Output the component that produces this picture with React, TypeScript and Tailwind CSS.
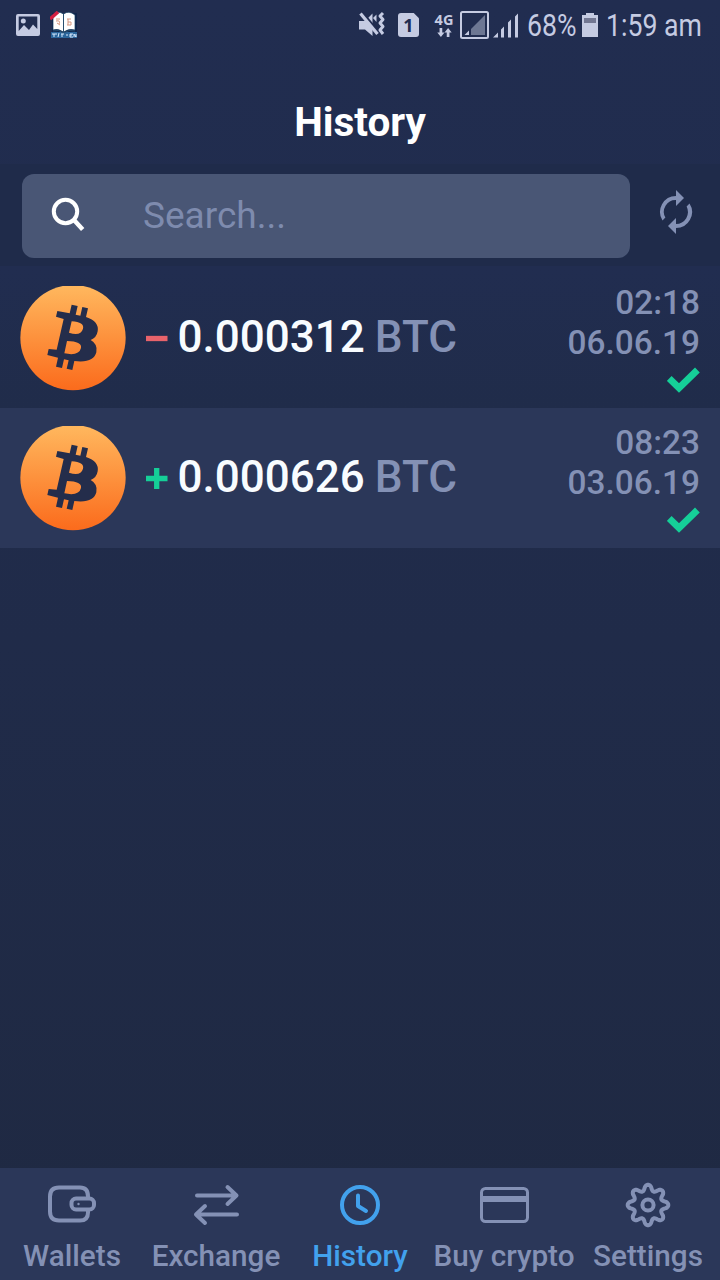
import React from "react";

function gearPath() {
  let d = "";
  for (let i = 0; i <= 192; i++) {
    const a = (i / 192) * Math.PI * 2;
    const c = Math.cos(8 * a);
    const r = 17.4 + 2.9 * Math.sign(c) * Math.pow(Math.abs(c), 0.75);
    d += `${i ? "L" : "M"}${(24 + r * Math.sin(a)).toFixed(2)} ${(24 - r * Math.cos(a)).toFixed(2)}`;
  }
  return d + "Z";
}

function StatusBar() {
  return (
    <div className="flex h-[50px] shrink-0 items-center text-[#c5cbe2]">
      <svg className="ml-4 h-6 w-6" viewBox="0 0 24 24">
        <path fill="currentColor" fillRule="evenodd" d="M2 1H22Q24 1 24 3V21Q24 23 22 23H2Q0 23 0 21V3Q0 1 2 1ZM2.700 3.500V18L8 12L13 17L17 11.500L21.300 16V3.500Z" />
        <circle cx="7.300" cy="8" r="2.500" fill="currentColor" />
      </svg>
      <svg className="ml-2.5 h-[28px] w-7" viewBox="0 0 28 28">
        <path fill="#10244b" d="M2 2h25v25H2z" />
        <path fill="#2b669c" d="M1 21h26v6H1z" />
        <path fill="#fff" stroke="#163d60" strokeWidth=".7" d="M3 4Q8 -1 13.500 3Q19 -1 25 4V19Q19 17 13.500 21Q8 17 3 19Z" />
        <path fill="none" stroke="#294f70" d="M13.500 3V21M3 20Q9 18 13.500 22Q19 18 25 20" />
        <path fill="none" stroke="#d31f42" strokeWidth="3.500" d="M0 8L8 1" />
        <path fill="none" stroke="#d69880" d="M6 8H10M6 10Q11 9 9 13M7 12L10 14M17 8H21M18 8V14M18 11H21V14H17" />
        <path fill="none" stroke="#d8eaff" d="M2 23H7M4 23V26M9 22L8 26M11 23H14M12 23V26M16 24H18M23 23H20V26H23M20 24H22M24 26V23L26 26V23" />
      </svg>
      <svg className="ml-[280px] h-7 w-[27px]" viewBox="0 0 27 28">
        <path fill="currentColor" d="M1 10H7L14.500 2.500V25L7 18.500H1Z" />
        <path fill="currentColor" d="M15 7L18.500 3.500V11Z" />
        <path d="M5 2L22 23" stroke="#212c50" strokeWidth="2.500" />
        <path d="M2.500 2.500L19.500 23" stroke="currentColor" strokeWidth="3.200" />
        <path fill="none" stroke="currentColor" strokeWidth="3" strokeLinejoin="round" d="M25 2L22 5L25 8.500L22 12L25 15.500L22 19L25 23" />
      </svg>
      <div className="ml-[13px] flex h-6 w-[21px] items-center justify-center rounded-[3px] bg-[#c5cbe2] font-['Open_Sans'] text-[18px] font-bold text-[#212c50] [clip-path:polygon(0_0,75%_0,100%_22%,100%_100%,0_100%)]">1</div>
      <div className="ml-[15px] flex w-[20px] flex-col items-center">
        <span className="font-['Open_Sans'] text-[14.500px] leading-[14px] font-bold">4G</span>
        <svg className="mt-px h-[9px] w-[15px]" viewBox="0 0 16 10"><path fill="currentColor" d="M2.500 0H5.500V5H8L4 10L0 5H2.500ZM12 0L16 5H13.500V10H10.500V5H8Z" /></svg>
      </div>
      <svg className="ml-[6px] h-7 w-[29px]" viewBox="0 0 29 28">
        <rect x="1" y="1" width="27" height="26" rx="1.500" fill="none" stroke="currentColor" strokeWidth="2" />
        <path fill="#6d7793" d="M25 4V24H11V18Z" />
        <path fill="currentColor" d="M9 19.500V24H4.500Z" />
      </svg>
      <svg className="ml-[4px] h-[25px] w-[26px]" viewBox="0 0 26 25">
        <path fill="currentColor" d="M0 24.500L5 19.500V24.500ZM8 16.500L11 13.500V24.500H8ZM15 9.500L18 6.500V24.500H15ZM22 3.500L25 .5V24.500H22Z" />
      </svg>
      <span className="ml-[8px] inline-block w-12 origin-left scale-x-[.86] text-[31px] leading-none whitespace-nowrap">68%</span>
      <svg className="ml-[7px] h-6 w-4" viewBox="0 0 16 24">
        <path fill="currentColor" d="M4 0H12V2H16V24H0V2H4Z" /><path fill="#737893" d="M2 5H14V10H2Z" />
      </svg>
      <span className="ml-[8px] inline-block w-[95px] origin-left scale-x-[.86] text-[31px] leading-none whitespace-nowrap">1:59 am</span>
    </div>
  );
}

function Bitcoin({ id }: { id: string }) {
  return (
    <svg className="h-[106px] w-[106px]" viewBox="0 0 318 318">
      <defs>
        <linearGradient id={id} x1="0" y1="0" x2="0" y2="1">
          <stop stopColor="#ffb85e" /><stop offset="1" stopColor="#fb6b1c" />
        </linearGradient>
        <clipPath id={id + "-clip"}><path d="M0 3H318V318H0Z" /></clipPath>
      </defs>
      <circle cx="159" cy="158" r="158" fill={`url(#${id})`} clipPath={`url(#${id}-clip)`} />
      <path fill="#242d4b" fillRule="evenodd" d="M112 78L149 85L155 59L173 63L167 89L181 92L187 66L204 70L198 96Q238 109 233 139Q230 158 212 165Q234 177 229 202Q221 235 163 228L157 255L140 251L146 226L132 223L126 249L108 245L114 218L82 210L86 192L110 194L131 102L108 95ZM155 109L147 143Q182 155 189 131Q194 112 155 109ZM141 168L133 205Q177 214 183 189Q187 169 141 168Z" />
    </svg>
  );
}

function Transaction({ id, positive, amount, time, date }: { id: string; positive?: boolean; amount: string; time: string; date: string }) {
  return (
    <div className={`flex h-[140px] shrink-0 pr-5 pl-5 ${positive ? "bg-[#2b3759]" : "bg-linear-to-b from-[#212d50] to-[#202c4a]"}`}>
      <div className="pt-[17px]"><Bitcoin id={id} /></div>
      <svg className="mt-[59px] ml-5 h-[23px] w-[22px]" viewBox="0 0 22 23">
        <path d={positive ? "M0 11.500H21.500M10.700 1V22" : "M0 11.500H21.500"} strokeWidth="5.300" stroke={positive ? "#15cf98" : "#e8636b"} />
      </svg>
      <div className="mt-[43px] ml-[9.500px] text-[44px] leading-[52px] font-medium whitespace-nowrap text-[#f8fcff]">
        {amount} <span className="-ml-px text-[#8491b5]">BTC</span>
      </div>
      <div className="ml-auto flex flex-col items-end pt-[15px] text-[33.400px] leading-[40px] font-medium text-[#8491b5]">
        <span>{time}</span><span>{date}</span>
        <svg className="mt-[3.500px] h-[26px] w-[33px]" viewBox="0 0 33 26"><path fill="none" stroke="#15cf98" strokeWidth="6.800" d="M2.200 11.500L12 21L30.400 3" /></svg>
      </div>
    </div>
  );
}

function TabIcon({ name }: { name: string }) {
  const p = { fill: "none", stroke: "currentColor", strokeWidth: 4, strokeLinecap: "round" as const, strokeLinejoin: "round" as const };
  return (
    <svg className="h-12 w-12 overflow-visible" viewBox="0 0 48 48">
      {name === "Wallets" && <g {...p} transform="translate(0 .5)"><path d="M40 17V16Q40 7 32 7H11Q2 7 2 16V31Q2 40 11 40H32Q40 40 40 32V30" /><rect x="23.500" y="18" width="22.500" height="11" rx="4.500" /><circle cx="30.500" cy="23.500" r="1.200" fill="currentColor" stroke="none" /></g>}
      {name === "Exchange" && <path {...p} d="M5 15.500H44.500M35.500 7L44.500 15.500L35.500 24M45 34.500H4M13 26L4 34.500L13 43" />}
      {name === "History" && <g {...p}><circle cx="24" cy="25" r="18" /><path d="M22 15.500V26L30 31" /></g>}
      {name === "Buy crypto" && <g {...p} strokeWidth="3" transform="translate(0 .5)"><rect x="1.500" y="8" width="46" height="33" rx="4" /><path d="M1.500 18.500H47" strokeWidth="6" strokeLinecap="butt" /></g>}
      {name === "Settings" && <g {...p} transform="translate(0 1)" strokeWidth="4"><path d={gearPath()} /><circle cx="24" cy="24" r="5.600" /></g>}
    </svg>
  );
}

export default function App() {
  return (
    <div className="flex h-[1280px] w-[720px] flex-col overflow-hidden bg-linear-to-b from-[#212d50] to-[#1f2942] font-[Roboto,sans-serif]">
      <StatusBar />
      <header className="h-[114px] shrink-0 pt-[48px] text-center text-[40.500px] leading-[48px] font-bold text-white">History</header>
      <div className="flex h-[102px] shrink-0 bg-[#1f2b4a] pt-[10px] pl-[22px]">
        <div className="flex h-[84px] w-[608px] items-center rounded-[12px] bg-[#495675]">
          <svg className="-mt-[2px] ml-[29px] h-9 w-9" viewBox="0 0 36 36"><path d="M23 23L31.700 32.500" stroke="white" strokeWidth="4.500" /><circle cx="14.500" cy="14.500" r="11.700" fill="none" stroke="white" strokeWidth="4" /></svg>
          <span className="ml-[56px] text-[37px] text-[#7e8bae]">Search...</span>
        </div>
        <svg className="mt-[14px] ml-[22px] h-12 w-12" viewBox="0 0 24 24" fill="#8491b5"><path d="M12 6V9L16 5L12 1V4A8 8 0 0 0 5.240 16.260L6.700 14.800A5.900 5.900 0 0 1 12 6ZM18.760 7.740L17.300 9.200A6 6 0 0 1 12 18V15L8 19L12 23V20A8 8 0 0 0 18.760 7.740Z" /></svg>
      </div>
      <div className="h-[2px] shrink-0 bg-[#212d50]" />
      <Transaction id="sent" amount="0.000312" time="02:18" date="06.06.19" />
      <Transaction id="received" positive amount="0.000626" time="08:23" date="03.06.19" />
      <main className="flex-1" />
      <nav className="grid h-[112px] shrink-0 grid-cols-5 bg-[#2b3759] pt-[12px]">
        {["Wallets", "Exchange", "History", "Buy crypto", "Settings"].map((name) => (
          <div key={name} className={`flex flex-col items-center ${name === "History" ? "text-[#42a1ed]" : "text-[#8491b5]"}`}>
            <TabIcon name={name} />
            <span className="mt-[10px] text-[29.700px] leading-9 font-medium whitespace-nowrap">{name}</span>
          </div>
        ))}
      </nav>
    </div>
  );
}
